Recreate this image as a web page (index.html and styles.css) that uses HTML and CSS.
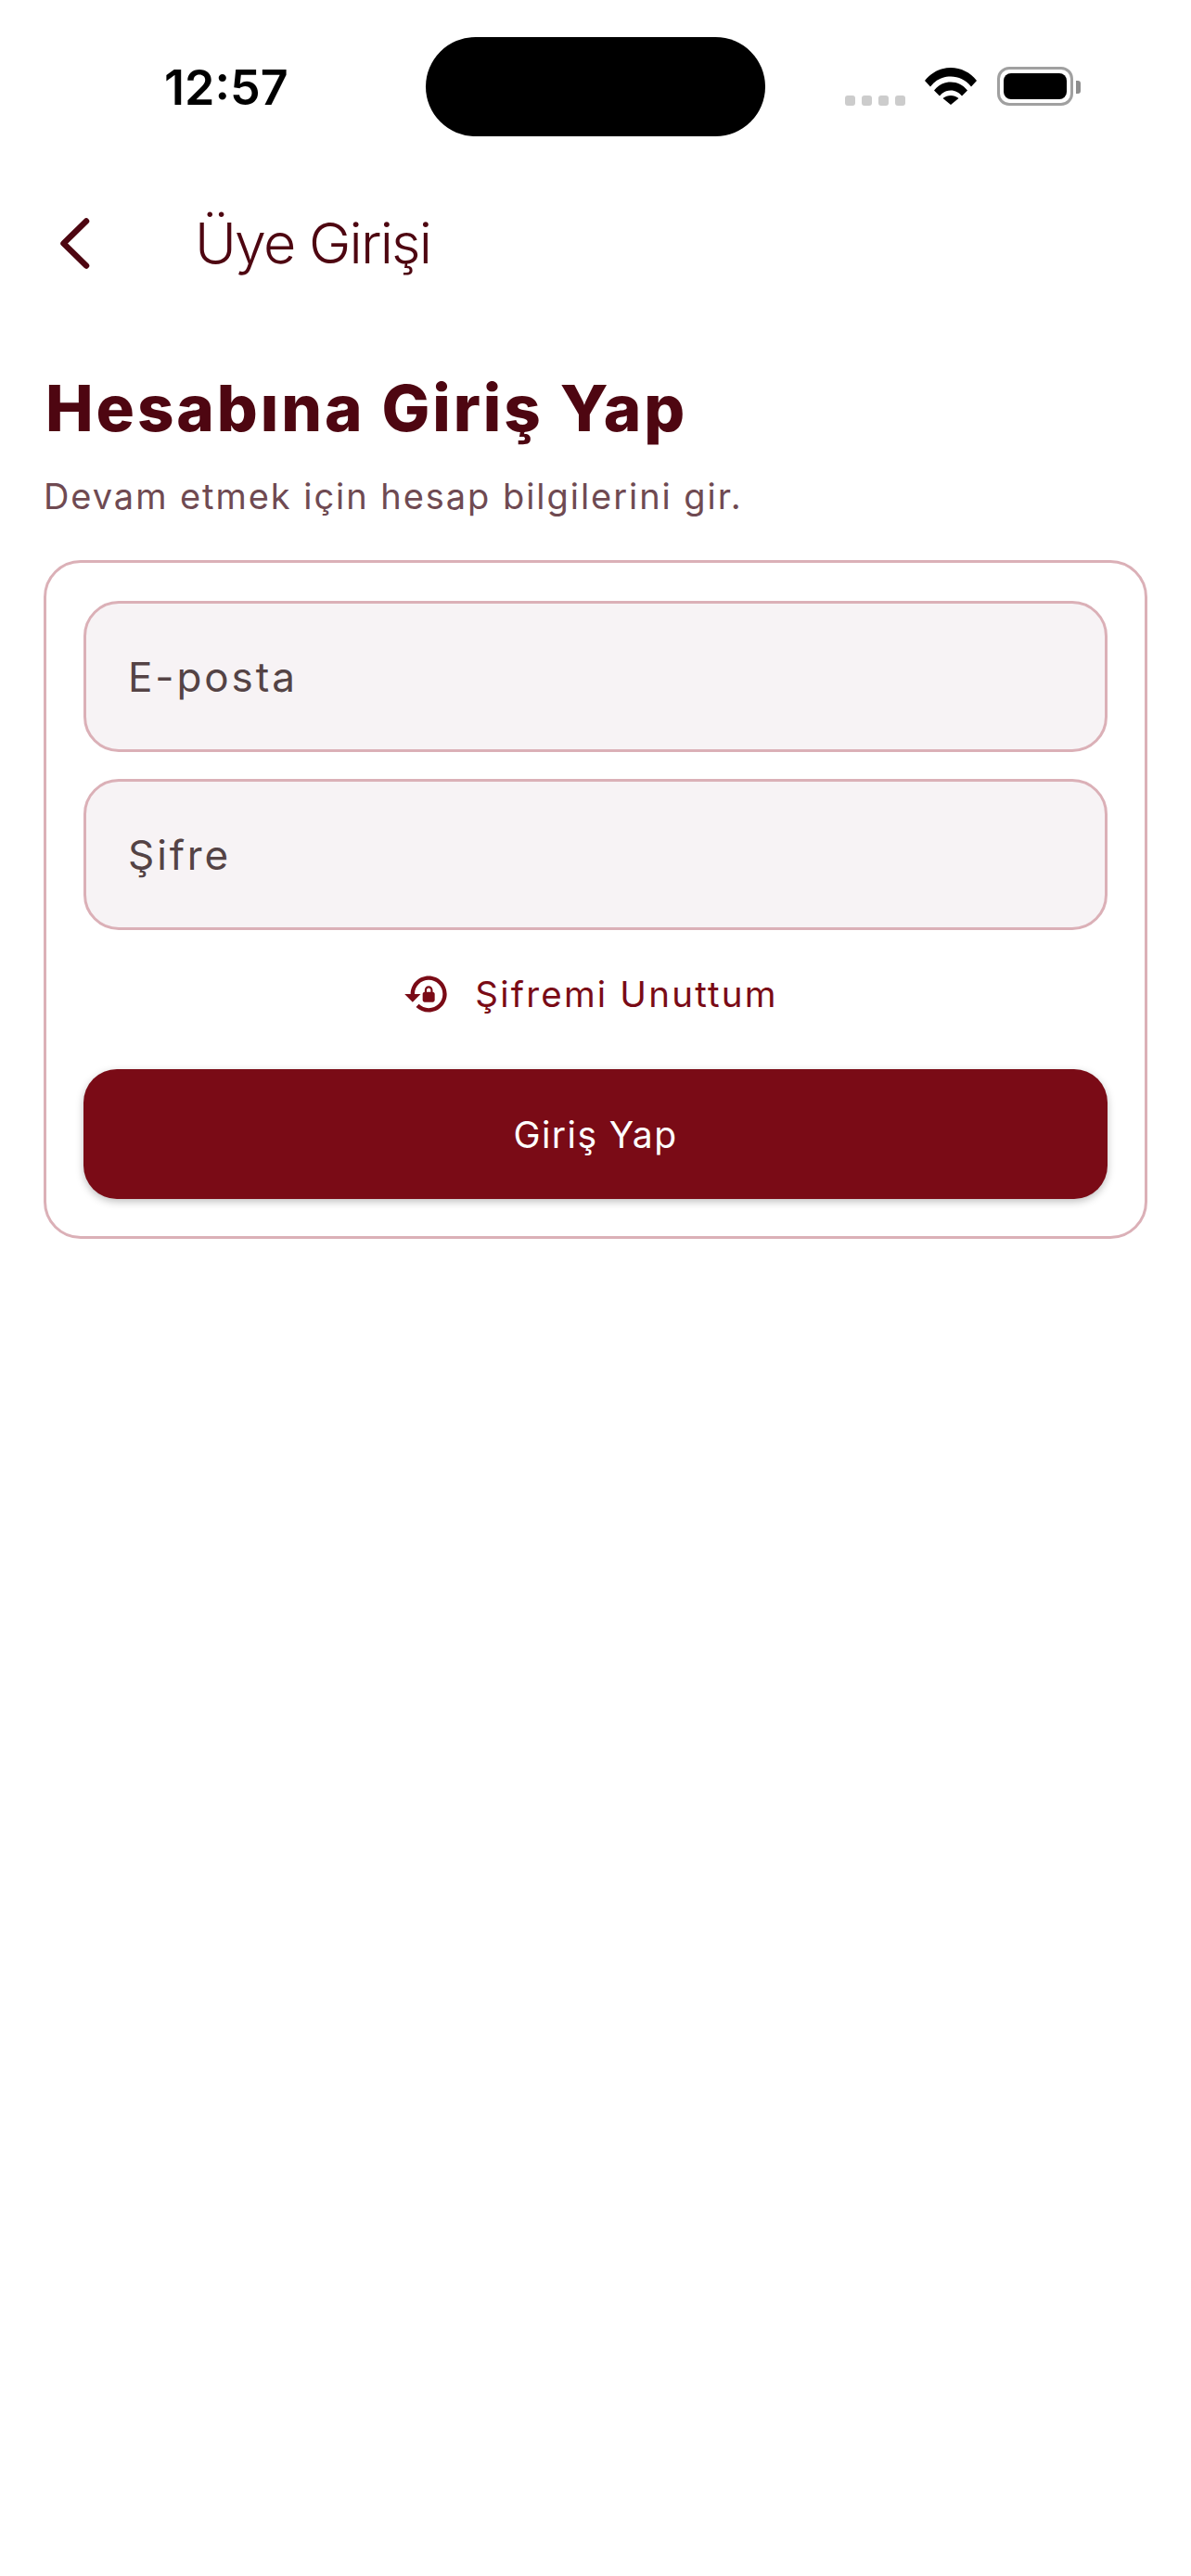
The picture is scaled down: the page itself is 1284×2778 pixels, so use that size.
FILE: index.html
```html
<!DOCTYPE html>
<html lang="tr">
<head>
    <meta charset="UTF-8">
    <meta name="viewport" content="width=device-width, initial-scale=1.0">
    <title>Üye Girişi</title>
    <link rel="stylesheet" href="styles.css">
</head>
<body>
    <div class="status-bar">
        <span class="time">12:57</span>
        <div class="island"></div>
        <div class="signal">
            <span class="dot"></span>
            <span class="dot"></span>
            <span class="dot"></span>
            <span class="dot"></span>
        </div>
        <svg class="wifi" viewBox="0 0 56 40" width="56" height="40">
            <path d="M0 14C7 5 17 0 28 0S49 5 56 14L50 20.500C44 13 36.500 9.500 28 9.500S12 13 6 20.500z"/>
            <path d="M10 24.500C15 18.500 21 15.500 28 15.500S41 18.500 46 24.500L40 30.500C37 27 33 24.500 28 24.500S19 27 16 30.500z"/>
            <path d="M19.500 33C22 31 25 30 28 30S34 31 36.500 33L28 40z"/>
        </svg>
        <div class="battery">
            <div class="battery-level"></div>
        </div>
        <div class="battery-cap"></div>
    </div>

    <header class="app-bar">
        <svg class="back" viewBox="0 0 32 55" width="32" height="55">
            <path d="M28 3.500L3.500 27.500L28 51.500"/>
        </svg>
        <h1>Üye Girişi</h1>
    </header>

    <main class="content">
        <h2>Hesabına Giriş Yap</h2>
        <p class="subtitle">Devam etmek için hesap bilgilerini gir.</p>

        <form class="card">
            <div class="field">E-posta</div>
            <div class="field">Şifre</div>
            <div class="forgot">
                <svg class="forgot-icon" viewBox="0 0 24 24" width="52" height="52">
                    <path d="M13 3c-4.970 0-9 4.030-9 9H1l4 4 4-4H6c0-3.860 3.140-7 7-7s7 3.140 7 7-3.140 7-7 7c-1.900 0-3.620-.76-4.880-1.990L6.700 18.420C8.320 20.010 10.550 21 13 21c4.970 0 9-4.030 9-9s-4.030-9-9-9zm2 8v-1c0-1.100-.9-2-2-2s-2 .9-2 2v1c-.55 0-1 .45-1 1v3c0 .55.45 1 1 1h4c.55 0 1-.45 1-1v-3c0-.55-.45-1-1-1zm-1 0h-2v-1c0-.55.45-1 1-1s1 .45 1 1v1z"/>
                </svg>
                <span>Şifremi Unuttum</span>
            </div>
            <button class="submit" type="button">Giriş Yap</button>
        </form>
    </main>
</body>
</html>
```

FILE: styles.css
```css
* {
    box-sizing: border-box;
}
body {
    font-family: Inter, "Noto Sans", sans-serif;
    margin: 0;
    padding: 0;
    background-color: #fff;
}
.status-bar {
    display: flex;
    align-items: flex-start;
    height: 147px;
    padding: 40px 0 0 177px;
}
.time {
    width: 282px;
    margin-top: 28px;
    font-size: 52px;
    line-height: 54px;
    font-weight: 600;
    color: #000;
}
.island {
    width: 366px;
    height: 107px;
    border-radius: 54px;
    background-color: #000;
}
.signal {
    display: flex;
    gap: 7px;
    margin: 63px 0 0 86px;
}
.dot {
    width: 11px;
    height: 11px;
    border-radius: 3px;
    background-color: #ccc;
}
.wifi {
    margin: 33px 0 0 21px;
    fill: #000;
}
.battery {
    width: 82px;
    height: 42px;
    margin: 32px 0 0 22px;
    padding: 4px;
    border: 3px solid #a0a0a0;
    border-radius: 13px;
}
.battery-level {
    height: 100%;
    border-radius: 8px;
    background-color: #000;
}
.battery-cap {
    width: 5px;
    height: 14px;
    margin: 47px 0 0 3px;
    border-radius: 0 3px 3px 0;
    background-color: #8e8e8e;
}
.app-bar {
    display: flex;
    align-items: center;
    height: 110px;
    margin-top: 60px;
    padding-left: 65px;
}
.back {
    fill: none;
    stroke: #4e0611;
    stroke-width: 6.500;
    stroke-linecap: round;
    stroke-linejoin: round;
}
.app-bar h1 {
    margin: 0 0 0 113px;
    font-size: 61px;
    font-weight: 300;
    letter-spacing: -1.800px;
    color: #4e0611;
}
.content {
    padding: 0 47px;
}
h2 {
    margin: 83px 0 0 2px;
    font-size: 69px;
    line-height: 80px;
    font-weight: 800;
    letter-spacing: 2.900px;
    color: #4e0611;
}
.subtitle {
    margin: 31px 0 0;
    font-size: 38px;
    line-height: 48px;
    letter-spacing: 1.950px;
    color: #6f4a52;
}
.card {
    display: flex;
    flex-direction: column;
    margin-top: 45px;
    padding: 41px 40px 40px;
    border: 3px solid #dbb0b7;
    border-radius: 40px;
}
.field {
    display: flex;
    align-items: center;
    height: 163px;
    margin-bottom: 29px;
    padding-left: 45px;
    border: 3px solid #dbb0b7;
    border-radius: 38px;
    background-color: #f7f3f5;
    font-size: 44px;
    letter-spacing: 2.900px;
    color: #544345;
}
.forgot {
    display: flex;
    align-items: center;
    justify-content: center;
    gap: 26px;
    height: 52px;
    margin-top: 14px;
    padding-right: 11px;
    font-size: 38.500px;
    font-weight: 400;
    letter-spacing: 2.200px;
    color: #7a0b16;
}
.forgot-icon {
    fill: #7a0b16;
}
.submit {
    height: 140px;
    margin-top: 55px;
    border: none;
    border-radius: 36px;
    background-color: #7a0b16;
    box-shadow: 0 3px 8px rgba(0, 0, 0, 0.25);
    font-family: inherit;
    font-size: 39px;
    font-weight: 400;
    letter-spacing: 1.400px;
    color: #fff;
}
```
